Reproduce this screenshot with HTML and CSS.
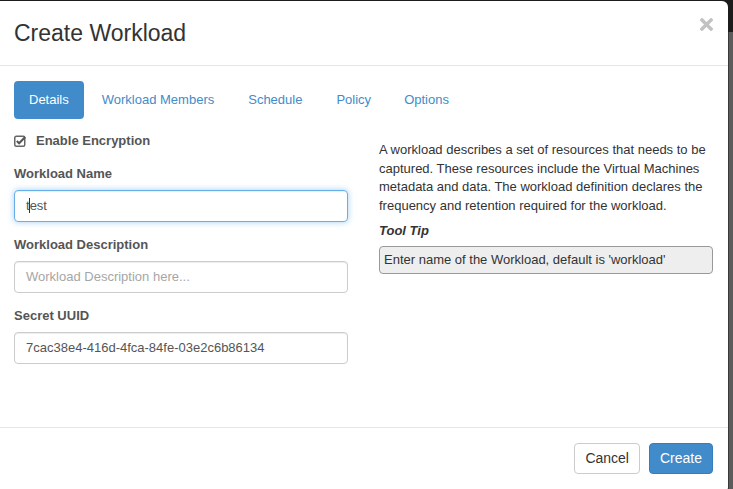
FILE: index.html
```html
<!DOCTYPE html>
<html>
<head>
<meta charset="utf-8">
<link rel="stylesheet" href="styles.css">
</head>
<body>
<div class="backdrop">
  <div class="modal">
    <div class="modal-header">
      <h4 class="modal-title">Create Workload</h4>
      <button class="close" aria-label="Close">
        <svg width="13" height="13" viewBox="0 0 13 13"><path d="M2 2 L11 11 M11 2 L2 11" stroke="#c2c2c2" stroke-width="3.4" stroke-linecap="square"/></svg>
      </button>
    </div>
    <div class="modal-body">
      <ul class="nav-pills">
        <li class="active"><a>Details</a></li>
        <li><a>Workload Members</a></li>
        <li><a>Schedule</a></li>
        <li><a>Policy</a></li>
        <li><a>Options</a></li>
      </ul>
      <div class="tab-content">
        <div class="col-left">
          <div class="checkbox-row">
            <svg class="check-icon" width="12" height="13" viewBox="0 0 12 13">
              <rect x="0.75" y="2.25" width="10" height="10" rx="1.5" fill="none" stroke="#666" stroke-width="1.5"/>
              <path d="M2.8 7 L5.1 9.3 L11.2 3" fill="none" stroke="#555" stroke-width="2"/>
            </svg>
            <span class="checkbox-label">Enable Encryption</span>
          </div>
          <div class="form-group">
            <label class="control-label">Workload Name</label>
            <div class="form-control focus">t<span class="caret"></span>est</div>
          </div>
          <div class="form-group">
            <label class="control-label">Workload Description</label>
            <div class="form-control placeholder">Workload Description here...</div>
          </div>
          <div class="form-group">
            <label class="control-label">Secret UUID</label>
            <div class="form-control">7cac38e4-416d-4fca-84fe-03e2c6b86134</div>
          </div>
        </div>
        <div class="col-right">
          <p class="help-text">A workload describes a set of resources that needs to be captured. These resources include the Virtual Machines metadata and data. The workload definition declares the frequency and retention required for the workload.</p>
          <div class="tooltip-title">Tool Tip</div>
          <div class="tooltip-box">Enter name of the Workload, default is 'workload'</div>
        </div>
      </div>
    </div>
    <div class="modal-footer">
      <button class="btn btn-default">Cancel</button>
      <button class="btn btn-primary">Create</button>
    </div>
  </div>
  <div class="side-strip">
    <div class="strip-top"></div>
    <div class="strip-body"></div>
  </div>
</div>
</body>
</html>
```

FILE: styles.css
```css
* { box-sizing: border-box; }
html, body {
  margin: 0;
  padding: 0;
  width: 733px;
  height: 489px;
  overflow: hidden;
  background: #1b1b1b;
  font-family: "Liberation Sans", Arial, sans-serif;
  color: #333;
}
.backdrop {
  display: flex;
  width: 733px;
  height: 489px;
  padding-top: 1px;
}
.modal {
  width: 728px;
  height: 492px;
  background: #fff;
  border-radius: 0 6px 6px 0;
  display: flex;
  flex-direction: column;
  flex-shrink: 0;
}
.side-strip {
  flex: 1;
  display: flex;
  flex-direction: column;
  margin-top: -1px;
}
.strip-top { height: 32px; background: #1c1c1c; }
.strip-body {
  flex: 1;
  background: linear-gradient(to right, #3a3a3a 0 1px, #5c5c5c 1px);
}
.modal-header {
  height: 64px;
  border-bottom: 1px solid #e5e5e5;
  display: flex;
  align-items: center;
  justify-content: space-between;
  padding: 0 15px 0 14px;
  box-sizing: content-box;
}
.modal-title {
  margin: 0;
  font-size: 23px;
  font-weight: normal;
  line-height: 33px;
  color: #333;
}
.close {
  border: 0;
  background: none;
  padding: 0;
  margin: 0 0 18px 0;
  width: 13px;
  height: 13px;
  display: flex;
}
.modal-body {
  flex: 1;
  padding: 15px 15px 0 14px;
}
.nav-pills {
  list-style: none;
  margin: 0;
  padding: 0;
  display: flex;
  gap: 3px;
}
.nav-pills a {
  display: block;
  padding: 10px 15px;
  line-height: 18px;
  font-size: 13px;
  color: #428bca;
  border-radius: 4px;
}
.nav-pills li:nth-child(3) a { padding-left: 16px; padding-right: 16px; }
.nav-pills .active a {
  background: #428bca;
  color: #fff;
}
.tab-content {
  margin-top: 12px;
  display: grid;
  grid-template-columns: 334px 334px;
  column-gap: 31px;
}
.checkbox-row {
  display: flex;
  align-items: center;
  height: 20px;
  margin-bottom: 13px;
}
.check-icon { margin-right: 10px; margin-top: -1px; }
.checkbox-label {
  font-size: 13px;
  font-weight: bold;
  color: #555;
  line-height: 20px;
}
.form-group { margin-bottom: 13px; }
.control-label {
  display: block;
  font-size: 13px;
  font-weight: bold;
  color: #555;
  line-height: 20px;
  margin-bottom: 6px;
}
.form-control {
  height: 32px;
  border: 1px solid #ccc;
  border-radius: 4px;
  padding: 0 11px;
  font-size: 13px;
  line-height: 30px;
  color: #555;
  box-shadow: inset 0 1px 1px rgba(0,0,0,.075);
  white-space: nowrap;
}
.form-control.focus {
  border-color: #66afe9;
  box-shadow: inset 0 1px 1px rgba(0,0,0,.075), 0 0 6px rgba(102,175,233,.6);
}
.form-control.placeholder { color: #a6a6a6; }
.caret {
  display: inline-block;
  width: 1px;
  height: 15px;
  background: #333;
  vertical-align: -3px;
  margin-left: -1px;
}
.col-right { padding-top: 10px; }
.help-text {
  margin: 0 0 7px 0;
  font-size: 13px;
  line-height: 18.6px;
  color: #333;
}
.tooltip-title {
  font-size: 13px;
  font-weight: bold;
  font-style: italic;
  line-height: 18.6px;
  color: #333;
  margin-bottom: 5px;
}
.tooltip-box {
  background: #eee;
  border: 1px solid #999;
  border-radius: 4px;
  padding: 4px 4px;
  font-size: 13px;
  line-height: 18px;
  color: #333;
}
.modal-footer {
  border-top: 1px solid #e5e5e5;
  padding: 15px 15px 19px;
  display: flex;
  justify-content: flex-end;
  gap: 9px;
}
.btn {
  font-family: "Liberation Sans", Arial, sans-serif;
  font-size: 14px;
  line-height: 19px;
  padding: 5px 10px;
  border-radius: 4px;
  border: 1px solid transparent;
  height: 31px;
}
.btn-default { background: #fff; border-color: #ccc; color: #333; }
.btn-primary { background: #428bca; border-color: #357ebd; color: #fff; }
```
